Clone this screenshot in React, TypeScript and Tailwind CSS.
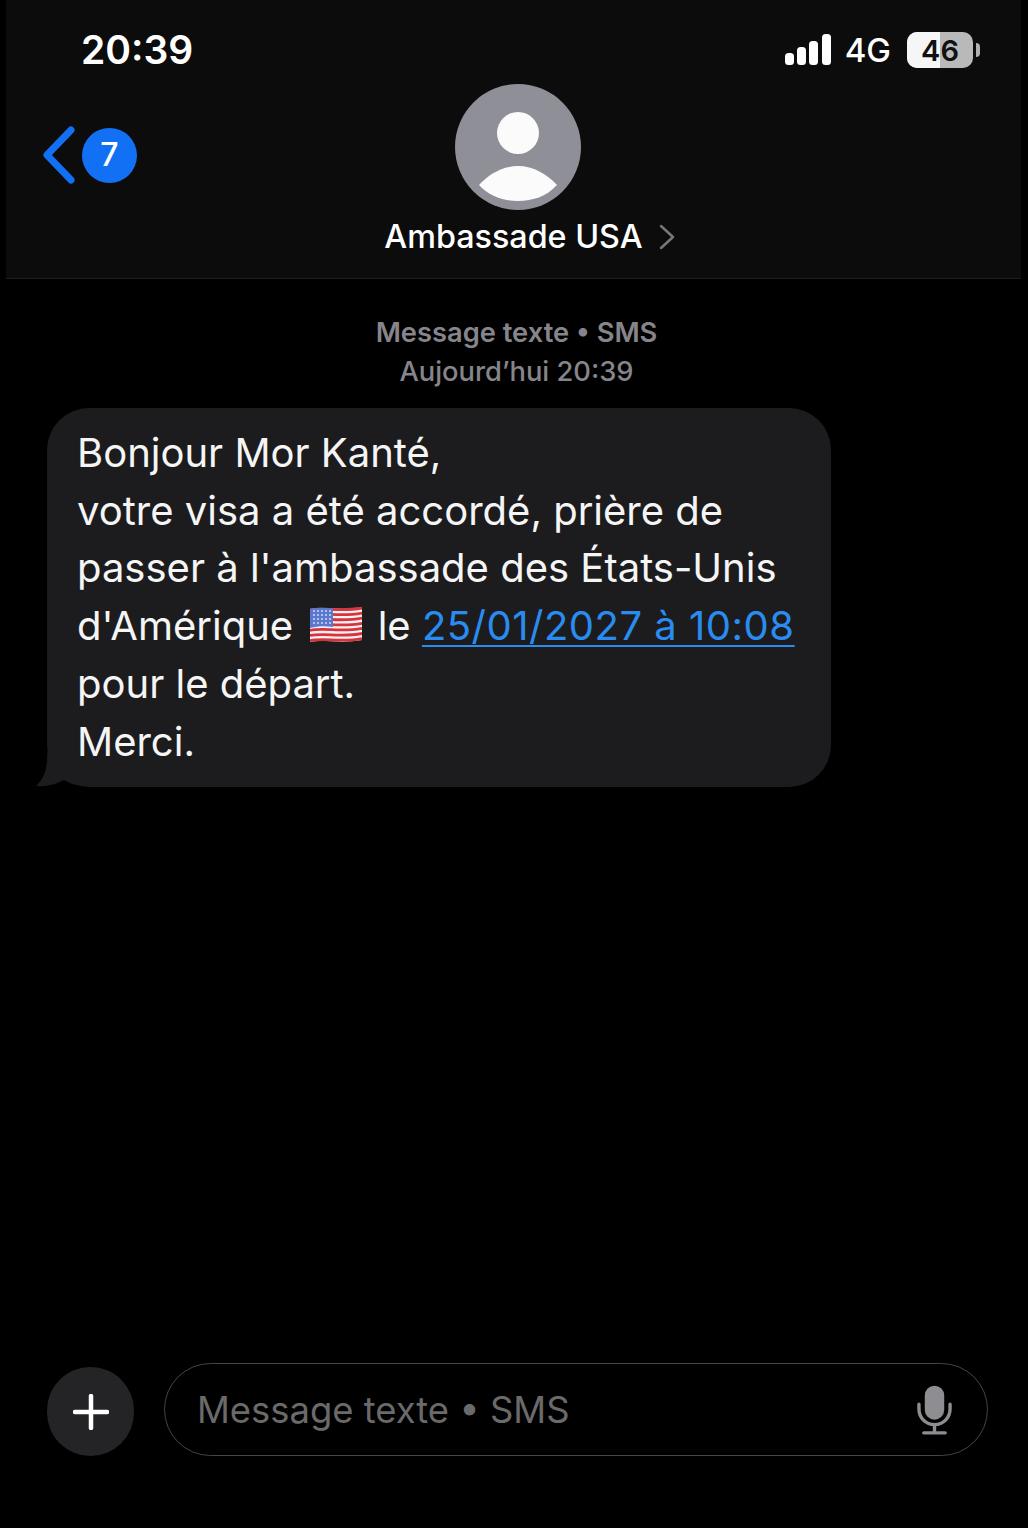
const font = "font-['Inter','Noto_Sans',sans-serif]";

function SignalBars() {
  return (
    <svg width="46" height="32" viewBox="0 0 46 32" fill="#fff" className="mb-[3px]">
      <rect x="0" y="20" width="9" height="12" rx="3.5" />
      <rect x="12" y="14" width="9" height="18" rx="3.5" />
      <rect x="24" y="8" width="9" height="24" rx="3.5" />
      <rect x="37" y="1" width="9" height="31" rx="3.5" />
    </svg>
  );
}

function Battery() {
  return (
    <div className="flex items-center">
      <div className="relative h-[36px] w-[66px] overflow-hidden rounded-[10px] bg-[#b9b9b9]">
        <div className="absolute inset-y-0 left-0 w-[33px] bg-[#f6f6f6]" />
        <span className="absolute inset-0 flex items-center justify-center text-[29px] font-semibold leading-none text-[#111]">46</span>
      </div>
      <div className="ml-[3px] h-[14px] w-[4px] rounded-r-full bg-[#b0b0b0]" />
    </div>
  );
}

function Avatar() {
  return (
    <svg width="126" height="126" viewBox="0 0 126 126">
      <circle cx="63" cy="63" r="63" fill="#8f9097" />
      <circle cx="63" cy="49" r="21" fill="#fbfbfb" />
      <path d="M24 101 C34 90 48 82 63 82 C78 82 92 90 102 101 C92 112 78 117 63 117 C48 117 34 112 24 101 Z" fill="#fbfbfb" />
    </svg>
  );
}

function UsFlag() {
  const stripes = [0, 1, 2, 3, 4, 5, 6];
  const wave = (y: number) => `M0 ${y + 1} C14 ${y - 2} 30 ${y + 3} 52 ${y - 1}`;
  return (
    <svg width="52" height="36" viewBox="0 0 52 36" className="ml-[6px] mr-[4px] inline-block align-[-3px]">
      <path d="M0 2 C14 -1 30 4 52 0 V33 C30 37 14 32 0 35 Z" fill="#f4f1f1" />
      {stripes.map(i => (
        <path key={i} d={wave(2 + i * 5.1)} stroke="#d8343f" strokeWidth="2.8" fill="none" />
      ))}
      <path d="M0 2 C8 0 15 0.5 23 1.5 V20 C15 19 8 19 0 21 Z" fill="#5a78cf" />
      {[4, 8, 12, 16].map(y =>
        [3, 7, 11, 15, 19].map(x => <circle key={`${x}-${y}`} cx={x + 1} cy={y} r="0.9" fill="#dfe6f7" />)
      )}
    </svg>
  );
}

export default function App() {
  return (
    <div className={`flex h-[1528px] w-[1028px] flex-col overflow-hidden bg-black text-white ${font}`}>
      <header className="ml-[6px] h-[279px] w-[1015px] shrink-0 border-b border-[#1d1d1d] bg-[#0c0c0c]">
        <div className="flex h-[84px] items-start justify-between pl-[75px] pr-[41px] pt-[26px]">
          <span className="text-[39px] font-semibold leading-[48px]">20:39</span>
          <div className="flex items-center pt-[5px]">
            <SignalBars />
            <span className="ml-[14px] text-[33px] font-medium leading-[38px]">4G</span>
            <div className="ml-[16px]">
              <Battery />
            </div>
          </div>
        </div>
        <div className="grid grid-cols-[1fr_auto_1fr] items-start">
          <div className="flex items-center pl-[36px] pt-[42px]">
            <svg width="34" height="58" viewBox="0 0 34 58" fill="none">
              <path d="M29 4 L5 29 L29 54" stroke="#1270f4" strokeWidth="7" strokeLinecap="round" strokeLinejoin="round" />
            </svg>
            <span className="ml-[6px] flex h-[55px] w-[55px] items-center justify-center rounded-full bg-[#1270f4] text-[32px] font-medium leading-none">7</span>
          </div>
          <div className="ml-[8px] flex flex-col items-center">
            <Avatar />
            <div className="mt-[6px] flex items-center pl-[24px]">
              <span className="text-[32.3px] font-medium leading-[42px]">Ambassade USA</span>
              <svg width="16" height="26" viewBox="0 0 16 26" fill="none" className="ml-[16px]">
                <path d="M2 2 L14 13 L2 24" stroke="#777" strokeWidth="2.5" strokeLinecap="round" strokeLinejoin="round" />
              </svg>
            </div>
          </div>
          <div />
        </div>
      </header>

      <main className="flex-1 pt-[34px]">
        <div className="pl-[5px] text-center text-[27.3px] leading-[39px] text-[#85858b]">
          <p className="font-semibold">Message texte • SMS</p>
          <p className="font-medium">Aujourd’hui 20:39</p>
        </div>

        <div className="relative ml-[47px] mt-[17px] w-[784px] rounded-[42px] bg-[#1c1c1e] pb-[17px] pl-[30px] pr-[20px] pt-[16px] text-[40px] leading-[57.7px] text-[#f5f5f5]">
          <svg width="40" height="34" viewBox="0 0 40 34" className="absolute bottom-0 left-[-11px]">
            <path d="M11 0 C12 14 8 26 0 33 C10 34 18 32 28 27 C32 29 36 31 40 32 L40 0 Z" fill="#1c1c1e" />
          </svg>
          <p className="relative">Bonjour Mor Kanté,</p>
          <p className="relative">votre visa a été accordé, prière de</p>
          <p className="relative">passer à l'ambassade des États-Unis</p>
          <p className="relative whitespace-nowrap">
            d'Amérique <UsFlag /> le <span className="tracking-[0.5px] text-[#2a8cf0] underline decoration-2 underline-offset-[5px]">25/01/2027 à 10:08</span>
          </p>
          <p className="relative">pour le départ.</p>
          <p className="relative">Merci.</p>
        </div>
      </main>

      <footer className="flex h-[165px] shrink-0 items-start pl-[47px] pr-[40px]">
        <button className="mt-[4px] flex h-[89px] w-[87px] shrink-0 items-center justify-center rounded-full bg-[#242426]">
          <svg width="36" height="36" viewBox="0 0 36 36" fill="none">
            <path d="M18 2 V34 M2 18 H34" stroke="#fff" strokeWidth="4.5" strokeLinecap="round" />
          </svg>
        </button>
        <div className="ml-[30px] flex h-[93px] flex-1 items-center justify-between rounded-full border-[1.5px] border-[#454545] pl-[32px] pr-[35px]">
          <span className="pt-[2px] text-[36.4px] leading-none text-[#6a6a6a]">Message texte • SMS</span>
          <svg width="35" height="52" viewBox="0 0 36 52" fill="none">
            <rect x="8" y="1" width="20" height="35" rx="10" fill="#8e8e92" />
            <path d="M2 20 V25 C2 34 9 41 18 41 C27 41 34 34 34 25 V20" stroke="#8e8e92" strokeWidth="3.5" strokeLinecap="round" />
            <path d="M18 41 V48 M7 49.5 H29" stroke="#8e8e92" strokeWidth="3.5" strokeLinecap="round" />
          </svg>
        </div>
      </footer>
    </div>
  );
}
